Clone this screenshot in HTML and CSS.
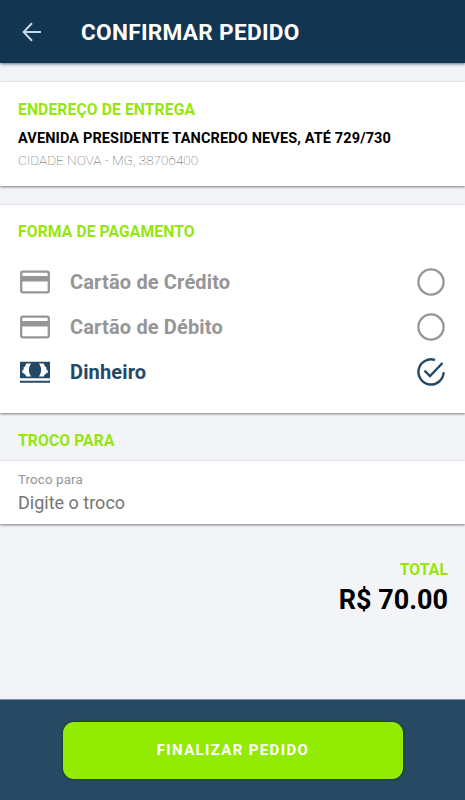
FILE: index.html
```
<!DOCTYPE html>
<html lang="pt-BR">
<head>
    <meta charset="UTF-8">
    <meta name="viewport" content="width=device-width, initial-scale=1.0">
    <title>Confirmar Pedido</title>
    <link rel="stylesheet" href="styles.css">
</head>
<body>
    <header class="topbar">
        <svg class="back" viewBox="0 0 20 20" width="20" height="20">
            <path d="M10 1.2 L1.6 10 L10 18.8 M1.6 10 H19" fill="none" stroke="#c3dcec" stroke-width="2"/>
        </svg>
        <h1>CONFIRMAR PEDIDO</h1>
    </header>

    <main>
        <section class="card address">
            <h2>ENDEREÇO DE ENTREGA</h2>
            <p class="street">AVENIDA PRESIDENTE TANCREDO NEVES, ATÉ 729/730</p>
            <p class="city">CIDADE NOVA - MG, 38706400</p>
        </section>

        <section class="card payment">
            <h2>FORMA DE PAGAMENTO</h2>
            <ul>
                <li>
                    <svg class="method" viewBox="0 0 30 24" width="30" height="24">
                        <rect x="1.2" y="1.7" width="27.6" height="20.6" rx="1.6" fill="none" stroke="#969696" stroke-width="2.3"/>
                        <path d="M1 6h28v5.5H1z" fill="#969696"/>
                    </svg>
                    <span>Cartão de Crédito</span>
                    <svg class="check" viewBox="0 0 28 28" width="28" height="28">
                        <circle cx="14" cy="14" r="12.6" fill="none" stroke="#969696" stroke-width="2.3"/>
                    </svg>
                </li>
                <li>
                    <svg class="method" viewBox="0 0 30 24" width="30" height="24">
                        <rect x="1.2" y="1.7" width="27.6" height="20.6" rx="1.6" fill="none" stroke="#969696" stroke-width="2.3"/>
                        <path d="M1 6h28v5.5H1z" fill="#969696"/>
                    </svg>
                    <span>Cartão de Débito</span>
                    <svg class="check" viewBox="0 0 28 28" width="28" height="28">
                        <circle cx="14" cy="14" r="12.6" fill="none" stroke="#969696" stroke-width="2.3"/>
                    </svg>
                </li>
                <li class="active">
                    <svg class="method" viewBox="0 0 30 24" width="30" height="24">
                        <path d="M0 1.7h30v16.6H0zM0 20.7h30v2H0z" fill="#244966"/>
                        <path d="M6.3 3.5H11Q6.6 10 11 16.6H6.3Q5.8 14.3 3.9 13.4L2.2 12.6V10.6L3.6 9.8V7.2L5 6.5ZM23.7 3.5H19Q23.4 10 19 16.6H23.7Q24.2 14.3 26.1 13.4L27.8 12.6V10.6L26.4 9.8V7.2L25 6.5Z" fill="#fff"/>
                    </svg>
                    <span>Dinheiro</span>
                    <svg class="check" viewBox="0 0 28 28" width="28" height="28">
                        <path d="M18 2A12.6 12.6 0 1 0 26.6 14.3M7.5 12.6L13 18L25.5 5" fill="none" stroke="#244966" stroke-width="2.4"/>
                    </svg>
                </li>
            </ul>
        </section>

        <h2 class="change-title">TROCO PARA</h2>
        <section class="card change">
            <label for="troco">Troco para</label>
            <input type="text" id="troco" placeholder="Digite o troco">
        </section>

        <section class="total">
            <h2>TOTAL</h2>
            <p>R$ 70.00</p>
        </section>
    </main>

    <footer class="bottom">
        <button class="finish-btn">FINALIZAR PEDIDO</button>
    </footer>
</body>
</html>
```

FILE: styles.css
```
* {
    box-sizing: border-box;
}
body {
    display: flex;
    flex-direction: column;
    height: 800px;
    margin: 0;
    font-family: Roboto, sans-serif;
    background-color: #f2f4f8;
}
h1, h2, p, ul {
    margin: 0;
    padding: 0;
}
.topbar {
    display: flex;
    align-items: center;
    height: 63px;
    padding: 1px 0 0 22px;
    background-color: #123552;
    box-shadow: 0 1px 3px rgba(18, 53, 82, 0.7);
}
.back {
    margin-right: 39px;
}
h1 {
    padding-top: 1px;
    color: #fff;
    font-size: 22.6px;
    font-weight: 700;
    line-height: 26px;
    letter-spacing: 0.3px;
    white-space: nowrap;
}
h2 {
    color: #94e60d;
    font-size: 15.7px;
    font-weight: 700;
    line-height: 20px;
    letter-spacing: 0.1px;
}
main {
    flex: 1;
    padding-top: 19px;
}
.card {
    padding: 0 18px;
    background-color: #fff;
    box-shadow: 0 1px 2.5px rgba(0, 0, 0, 0.5);
}
.address {
    height: 104px;
    padding-top: 18px;
    margin-bottom: 19px;
}
.street {
    margin-top: 9px;
    color: #000;
    font-size: 14.5px;
    font-weight: 700;
    line-height: 20px;
    letter-spacing: 0.13px;
    white-space: nowrap;
}
.city {
    margin-top: 1px;
    color: #4c4c4c;
    font-size: 13.6px;
    font-weight: 100;
    line-height: 20px;
}
.payment {
    height: 208px;
    padding-top: 17px;
}
.payment ul {
    margin-top: 17px;
    list-style: none;
}
.payment li {
    display: flex;
    align-items: center;
    height: 45px;
    padding-left: 2px;
    color: #969696;
    font-size: 20px;
    font-weight: 700;
    letter-spacing: 0.15px;
}
.payment li.active {
    color: #244966;
}
.method {
    margin-right: 20px;
}
.check {
    margin-left: auto;
    margin-right: 2px;
}
.change-title {
    padding: 18px 18px 10px;
}
.change {
    height: 63px;
    padding-top: 9px;
}
.change label {
    display: block;
    color: #969696;
    font-size: 13.4px;
    line-height: 20px;
    letter-spacing: 0.1px;
}
.change input {
    display: block;
    width: 100%;
    height: 25px;
    padding: 0 0 1px;
    border: none;
    outline: none;
    background: none;
    font-family: inherit;
    font-size: 18px;
}
.change input::placeholder {
    color: #757575;
}
.total {
    padding: 36px 17px 0;
    text-align: right;
}
.total p {
    margin-top: 4px;
    color: #000;
    font-size: 27px;
    font-weight: 700;
    line-height: 32px;
}
.bottom {
    height: 101px;
    padding-top: 22px;
    border-top: 1px solid #7892a3;
    background-color: #284963;
}
.finish-btn {
    display: block;
    width: 340px;
    height: 57px;
    margin: 0 0 0 63px;
    padding: 0 0 1px;
    border: none;
    border-radius: 11px;
    background-color: #93eb04;
    box-shadow: 0 0 2px 1px #164430;
    color: #fff;
    font-family: inherit;
    font-size: 15px;
    font-weight: 700;
    letter-spacing: 1.35px;
}
```
